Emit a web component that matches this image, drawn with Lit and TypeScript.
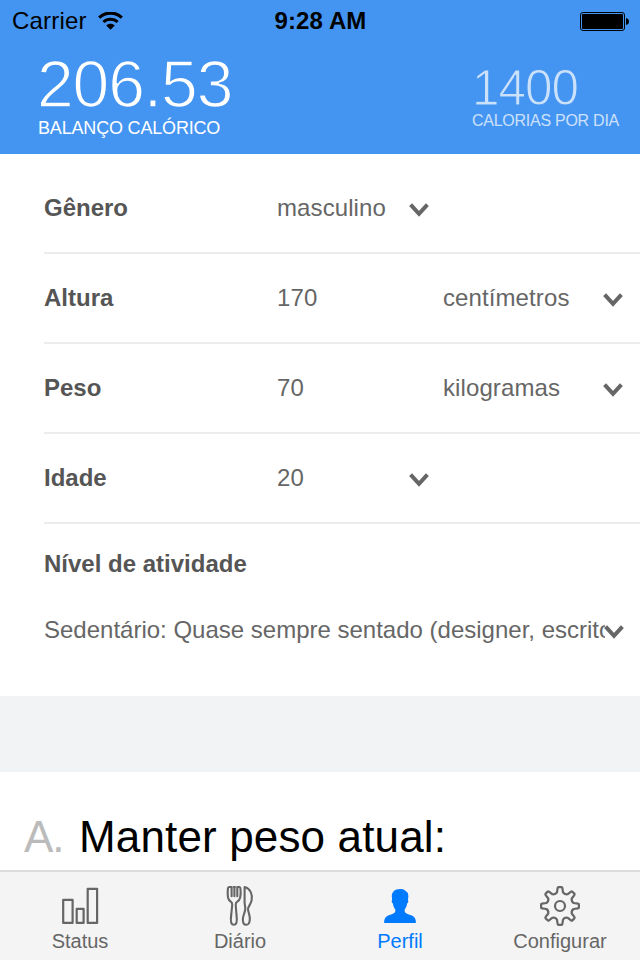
import { LitElement, html, css, svg, nothing } from "lit";
import { customElement, property } from "lit/decorators.js";

const chevron = svg`<svg class="chevron" width="20" height="14" viewBox="0 0 20 14">
  <path d="M1.6 1.7 L10 10.9 L18.4 1.7" fill="none" stroke="#666" stroke-width="4"/></svg>`;

/** Closed outline of an eight-toothed gear centred on (20, 22). */
function gearPath(): string {
  const point = (angle: number, radius: number, side: number) => {
    const x = 20 + radius * Math.sin(angle) + side * Math.cos(angle);
    const y = 22 - radius * Math.cos(angle) + side * Math.sin(angle);
    return `${x.toFixed(2)} ${y.toFixed(2)}`;
  };
  let d = "";
  for (let i = 0; i < 8; i++) {
    const a = (i * Math.PI) / 4;
    d += `${i ? "L" : "M"}${point(a, 13.6, -3)} L${point(a, 17.9, -2.4)} Q${point(a, 18.9, -2.3)} ${point(a, 18.9, -1.4)}`;
    d += ` L${point(a, 18.9, 1.4)} Q${point(a, 18.9, 2.3)} ${point(a, 17.9, 2.4)} L${point(a, 13.6, 3)}`;
    d += ` Q${point(a + Math.PI / 8, 12.1, 0)} ${point(a + Math.PI / 4, 13.6, -3)} `;
  }
  return d + "Z";
}

const icons: Record<string, unknown> = {
  status: svg`<svg width="40" height="44" viewBox="0 0 40 44" fill="none" stroke="#666" stroke-width="2.2" stroke-linejoin="round">
    <rect x="3.2" y="15.8" width="9.4" height="23.1"/><rect x="16.7" y="24.8" width="6.9" height="14.1"/>
    <rect x="27.7" y="4.8" width="9.4" height="34.1"/></svg>`,
  diario: svg`<svg width="40" height="44" viewBox="0 0 40 44" fill="none" stroke="#666" stroke-width="2.1" stroke-linejoin="round" stroke-linecap="round">
    <path d="M9.3 3 Q8 3 7.9 5 Q7.3 9.5 8 13.5 Q8.6 16.2 10.8 17.6 Q12.4 18.8 12.2 21 L11.2 31 Q10.4 36 11.3 39 Q12.1 40.8 13.8 40.8 Q15.6 40.8 16.4 39 Q17.3 36 16.5 31 L15.7 21 Q15.5 18.8 17.3 17.6 Q19.6 16.2 20.2 13.5 Q21 9.5 20.5 5 Q20.3 3 19.2 3 H17.3 V12.2 M9.3 3 H11.6 V12.2 M14.4 3.6 V12.2 M13.8 3 H15"/>
    <path d="M24.6 3 C30.2 4.5 32.8 10 31.6 16.4 C30.8 20.5 28 22.8 28 25 C28 28 30.2 31 29.8 36 C29.4 39.5 28.2 40.8 26.3 40.8 C23.6 40.8 22.6 38.5 22.9 34.5 C23.3 30.5 25.4 28 25.3 24 L24.6 19 Z"/></svg>`,
  perfil: svg`<svg width="40" height="44" viewBox="0 0 40 44" fill="#007aff">
    <path d="M20 5 C15 5 11.8 7.8 11.8 12 L12.1 16 C11.3 16.4 11.6 19 12.9 19.6 C13.2 22.2 14 24 15.3 25.3 V27.4 C14.6 29.6 10.6 30.3 8 31.6 C5.2 33 4.1 35 4.1 38.9 H35.9 C35.9 35 34.8 33 32 31.6 C29.4 30.3 25.4 29.6 24.7 27.4 V25.3 C26 24 26.8 22.2 27.1 19.6 C28.4 19 28.7 16.4 27.9 16 C28.8 12.5 28.6 8.4 25.8 7.3 C24.8 5.6 22.6 5 20 5 Z"/></svg>`,
  configurar: svg`<svg width="40" height="44" viewBox="0 0 40 44" fill="none" stroke="#666" stroke-width="2.2" stroke-linejoin="round">
    <circle cx="20" cy="22" r="5"/><path d=${gearPath()}/></svg>`,
};

@customElement("profile-row")
class ProfileRow extends LitElement {
  @property() label = "";
  @property() value = "";
  @property() unit = "";
  static styles = css`
    :host { display: grid; grid-template-columns: 233px 132px 34px 160px 1fr; align-items: center;
      height: 88px; margin-left: 44px; border-bottom: 2px solid #ededed; color: #666; white-space: nowrap; }
    .label { font-weight: bold; color: #555; }
    .text { letter-spacing: 0.1px; }
    .chevron { display: block; margin-top: 3px; }
  `;
  render() {
    return html`<span class="label">${this.label}</span><span class="text">${this.value}</span>
      ${this.unit ? html`<span></span><span class="text">${this.unit}</span>` : nothing}${chevron}`;
  }
}

@customElement("tab-item")
class TabItem extends LitElement {
  @property() icon = "";
  @property() label = "";
  static styles = css`
    :host { display: flex; flex-direction: column; align-items: center; color: #666; font-size: 20px; line-height: 24px; padding-top: 12px; }
    :host([active]) { color: #007aff; }
    svg { display: block; }
    .label { margin-top: 1px; white-space: nowrap; }
  `;
  render() {
    return html`${icons[this.icon]}<span class="label">${this.label}</span>`;
  }
}

@customElement("app-root")
class AppRoot extends LitElement {
  static styles = css`
    :host { display: flex; flex-direction: column; width: 640px; height: 960px; overflow: hidden; background: #fff;
      font: 24px/28px "Liberation Sans", Arial, sans-serif; }
    .header { height: 154px; flex: none; background: #4495f1; color: #fff; }
    .statusbar { display: grid; grid-template-columns: 1fr auto 1fr; height: 42px; align-items: center; padding: 0 11px 0 12px; color: #000; }
    .carrier { display: flex; align-items: center; gap: 11px; letter-spacing: 0.2px; }
    .time { font-weight: bold; letter-spacing: 0.1px; }
    .battery { justify-self: end; }
    .totals { display: flex; justify-content: space-between; padding: 0 21px 0 38px; white-space: nowrap; }
    /* An outline in the header colour trims the strokes to a light weight. */
    .big { font-size: 66px; line-height: 64px; letter-spacing: -1.1px; -webkit-text-stroke: 1.4px #4495f1; margin-left: -1px; }
    .balance .big { margin-top: 10px; }
    .balance .caption { font-size: 18px; line-height: 22px; margin-top: 1px; letter-spacing: -0.18px; }
    .goal { opacity: .72; }
    .goal .big { font-size: 49.5px; line-height: 48px; margin-top: 22px; margin-left: 0; letter-spacing: -1px; -webkit-text-stroke-width: 1.1px; }
    .goal .caption { font-size: 16px; line-height: 20px; margin-top: -1px; letter-spacing: -0.26px; }
    .form { flex: none; height: 542px; padding-top: 10px; box-sizing: border-box; }
    .activity { padding: 26px 15px 0 44px; color: #666; }
    .activity .label { font-weight: bold; color: #555; }
    .select { display: flex; align-items: center; margin-top: 38px; white-space: nowrap; }
    .select .text { width: 561px; overflow: hidden; flex: none; }
    .select .chevron { flex: none; margin-top: 3px; margin-left: -1px; }
    .band { height: 76px; flex: none; background: #f2f3f5; }
    .plan { height: 98px; flex: none; display: flex; padding: 38px 24px 0; box-sizing: border-box; font-size: 44px; line-height: 54px; color: #000; white-space: nowrap; }
    .letter { color: #bbb; width: 55px; letter-spacing: -1px; }
    .name { letter-spacing: 0.15px; }
    .tabs { height: 90px; flex: none; box-sizing: border-box; border-top: 2px solid #dcdcdc; background: #f4f4f4; display: grid; grid-template-columns: repeat(4, 1fr); }
  `;
  render() {
    return html`
      <div class="header">
        <div class="statusbar">
          <div class="carrier"><span>Carrier</span>
            <svg width="25" height="18" viewBox="0 0 25 18" fill="none" stroke="#000">
              <path d="M1.2 5.6 C7.5 -.5 17.5 -.5 23.8 5.6" stroke-width="3.2"/>
              <path d="M5.4 10 C9.5 6.2 15.5 6.2 19.6 10" stroke-width="3"/>
              <path d="M12.5 17.8 L8.2 13.5 C10.6 11.3 14.4 11.3 16.8 13.5 Z" fill="#000" stroke="none"/>
            </svg></div>
          <span class="time">9:28 AM</span>
          <svg class="battery" width="49" height="19" viewBox="0 0 49 19">
            <rect x=".5" y=".5" width="44" height="18" rx="2.5" fill="none" stroke="#000"/>
            <rect x="2" y="2" width="41" height="15" rx="1"/><path d="M46 6 Q49 6.8 49 9.5 Q49 12.2 46 13 Z"/>
          </svg>
        </div>
        <div class="totals">
          <div class="balance"><div class="big">206.53</div><div class="caption">BALANÇO CALÓRICO</div></div>
          <div class="goal"><div class="big">1400</div><div class="caption">CALORIAS POR DIA</div></div>
        </div>
      </div>
      <div class="form">
        <profile-row label="Gênero" value="masculino"></profile-row>
        <profile-row label="Altura" value="170" unit="centímetros"></profile-row>
        <profile-row label="Peso" value="70" unit="kilogramas"></profile-row>
        <profile-row label="Idade" value="20"></profile-row>
        <div class="activity">
          <div class="label">Nível de atividade</div>
          <div class="select"><span class="text">Sedentário: Quase sempre sentado (designer, escritor)</span>${chevron}</div>
        </div>
      </div>
      <div class="band"></div>
      <div class="plan"><span class="letter">A.</span><span class="name">Manter peso atual:</span></div>
      <div class="tabs">
        <tab-item icon="status" label="Status"></tab-item>
        <tab-item icon="diario" label="Diário"></tab-item>
        <tab-item icon="perfil" label="Perfil" active></tab-item>
        <tab-item icon="configurar" label="Configurar"></tab-item>
      </div>`;
  }
}
